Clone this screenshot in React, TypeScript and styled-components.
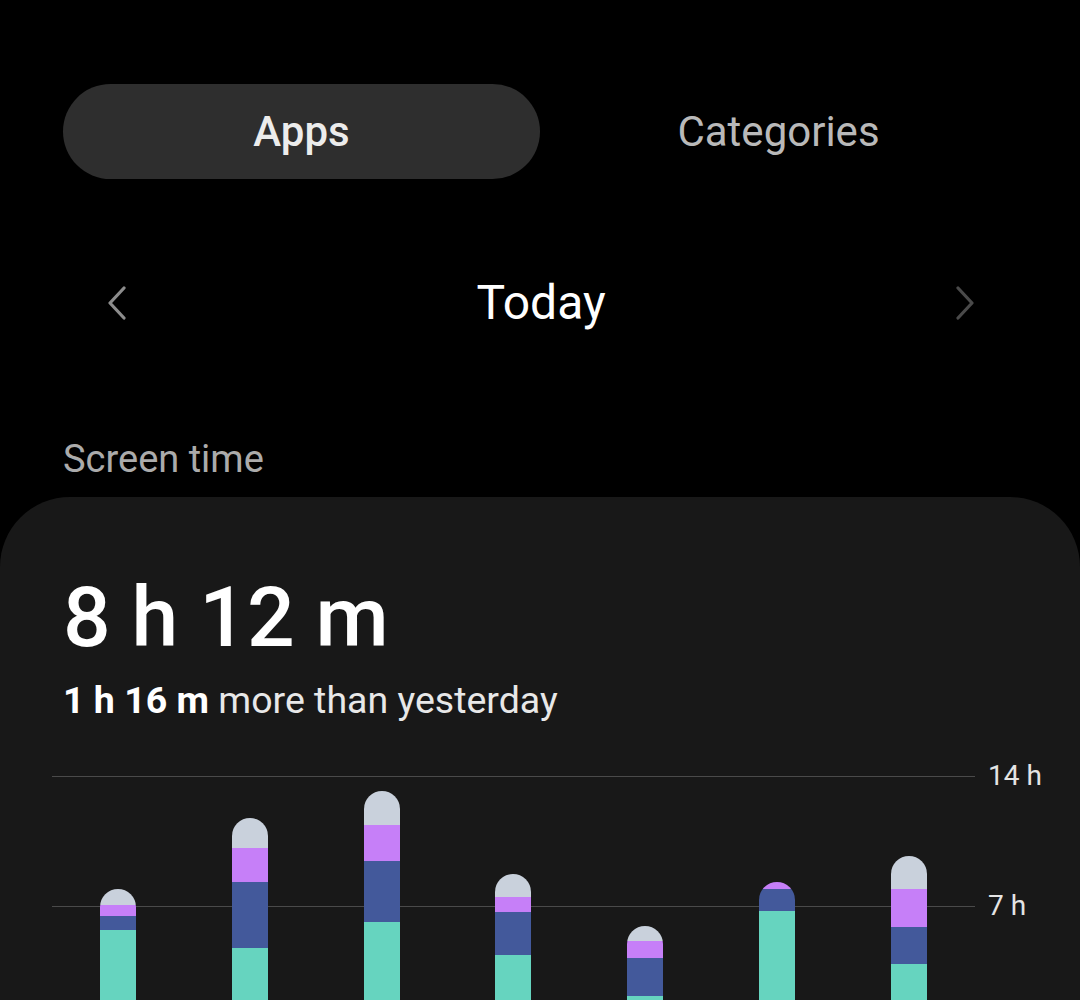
import React from "react";
import styled, { createGlobalStyle } from "styled-components";

const PX_PER_HOUR = 130 / 7;

// hours per segment, top to bottom: other, social, video, browsing
const days = [
  [0.86, 0.59, 0.75, 5.71],
  [1.62, 1.83, 3.55, 4.74],
  [1.83, 1.94, 3.28, 6.14],
  [1.24, 0.81, 2.32, 4.36],
  [0.81, 0.92, 2.05, 2.15],
  [0, 0.38, 1.18, 6.73],
  [1.78, 2.05, 1.99, 3.88]
];

const segmentColors = ["#c9d1dc", "#c67ff8", "#43599b", "#66d4bf"];

const GlobalStyle = createGlobalStyle`
  html, body {
    margin: 0;
    background: #000;
    overflow: hidden;
  }
  body {
    font-family: Roboto, "Liberation Sans", sans-serif;
    -webkit-font-smoothing: antialiased;
  }
`;

const Page = styled.div`
  display: flex;
  flex-direction: column;
  min-height: 1000px;
`;

const Tabs = styled.div`
  display: grid;
  grid-template-columns: 1fr 1fr;
  margin: 84px 63px 0;
  height: 95px;
`;

const Tab = styled.div<{ $active?: boolean }>`
  display: flex;
  align-items: center;
  justify-content: center;
  border-radius: 48px;
  font-size: 42px;
  font-weight: ${(p) => (p.$active ? 500 : 400)};
  color: ${(p) => (p.$active ? "#ececec" : "#b9b9b9")};
  background: ${(p) => (p.$active ? "#2e2e2e" : "transparent")};
`;

const DateRow = styled.div`
  display: flex;
  align-items: center;
  justify-content: space-between;
  height: 80px;
  margin-top: 84px;
  padding: 0 104px 0 106px;
`;

const DateLabel = styled.div`
  font-size: 48px;
  line-height: 1;
  color: #fff;
`;

const Chevron = styled.svg<{ $dim?: boolean }>`
  width: 22px;
  height: 34px;
  stroke: ${(p) => (p.$dim ? "#4a4a4a" : "#8c8c8c")};
  fill: none;
  stroke-width: 3.2;
  stroke-linecap: round;
  stroke-linejoin: round;
`;

const SectionTitle = styled.div`
  margin: 97px 0 0 63px;
  font-size: 38px;
  line-height: 38px;
  color: #ababab;
`;

const Card = styled.div`
  flex: 1;
  margin-top: 19px;
  background: #181818;
  border-radius: 70px 70px 0 0;
  padding-top: 79px;
`;

const Total = styled.div`
  padding-left: 63px;
  font-size: 84px;
  line-height: 84px;
  font-weight: 500;
  color: #fff;
`;

const Delta = styled.div`
  margin-top: 22px;
  padding-left: 63px;
  font-size: 37.5px;
  line-height: 36px;
  color: #e8e8e8;
  b {
    font-weight: 700;
    color: #fff;
  }
`;

const Chart = styled.div`
  display: flex;
  margin-top: 58px;
  padding-left: 52px;
`;

const Plot = styled.div`
  position: relative;
  width: 923px;
  height: 260px;
  display: grid;
  grid-template-columns: repeat(7, 1fr);
  align-items: end;
`;

const GridLine = styled.div<{ $top: number }>`
  position: absolute;
  left: 0;
  right: 0;
  top: ${(p) => p.$top}px;
  height: 1px;
  background: #4a4a4a;
`;

const Axis = styled.div`
  position: relative;
  flex: 1;
`;

const AxisLabel = styled.div<{ $top: number }>`
  position: absolute;
  left: 13px;
  top: ${(p) => p.$top - 15}px;
  font-size: 28px;
  line-height: 30px;
  color: #e4e4e4;
`;

const Column = styled.div`
  display: flex;
  justify-content: center;
  position: relative;
  z-index: 1;
`;

const Bar = styled.div`
  width: 36px;
  display: flex;
  flex-direction: column;
  border-radius: 18px 18px 0 0;
  overflow: hidden;
`;

const Segment = styled.div<{ $color: string }>`
  background: ${(p) => p.$color};
`;

function Screen() {
  return (
    <Page>
      <Tabs>
        <Tab $active>Apps</Tab>
        <Tab>Categories</Tab>
      </Tabs>
      <DateRow>
        <Chevron viewBox="0 0 22 34">
          <path d="M18 2 L4 17 L18 32" />
        </Chevron>
        <DateLabel>Today</DateLabel>
        <Chevron viewBox="0 0 22 34" $dim>
          <path d="M4 2 L18 17 L4 32" />
        </Chevron>
      </DateRow>
      <SectionTitle>Screen time</SectionTitle>
      <Card>
        <Total>8 h 12 m</Total>
        <Delta>
          <b>1 h 16 m</b> more than yesterday
        </Delta>
        <Chart>
          <Plot>
            <GridLine $top={0} />
            <GridLine $top={130} />
            {days.map((segments, i) => (
              <Column key={i}>
                <Bar>
                  {segments.map((h, j) =>
                    h > 0 ? (
                      <Segment
                        key={j}
                        $color={segmentColors[j]}
                        style={{ height: Math.round(h * PX_PER_HOUR) }}
                      />
                    ) : null
                  )}
                </Bar>
              </Column>
            ))}
          </Plot>
          <Axis>
            <AxisLabel $top={0}>14 h</AxisLabel>
            <AxisLabel $top={130}>7 h</AxisLabel>
          </Axis>
        </Chart>
      </Card>
    </Page>
  );
}

export default function App() {
  return (
    <>
      <GlobalStyle />
      <Screen />
    </>
  );
}
